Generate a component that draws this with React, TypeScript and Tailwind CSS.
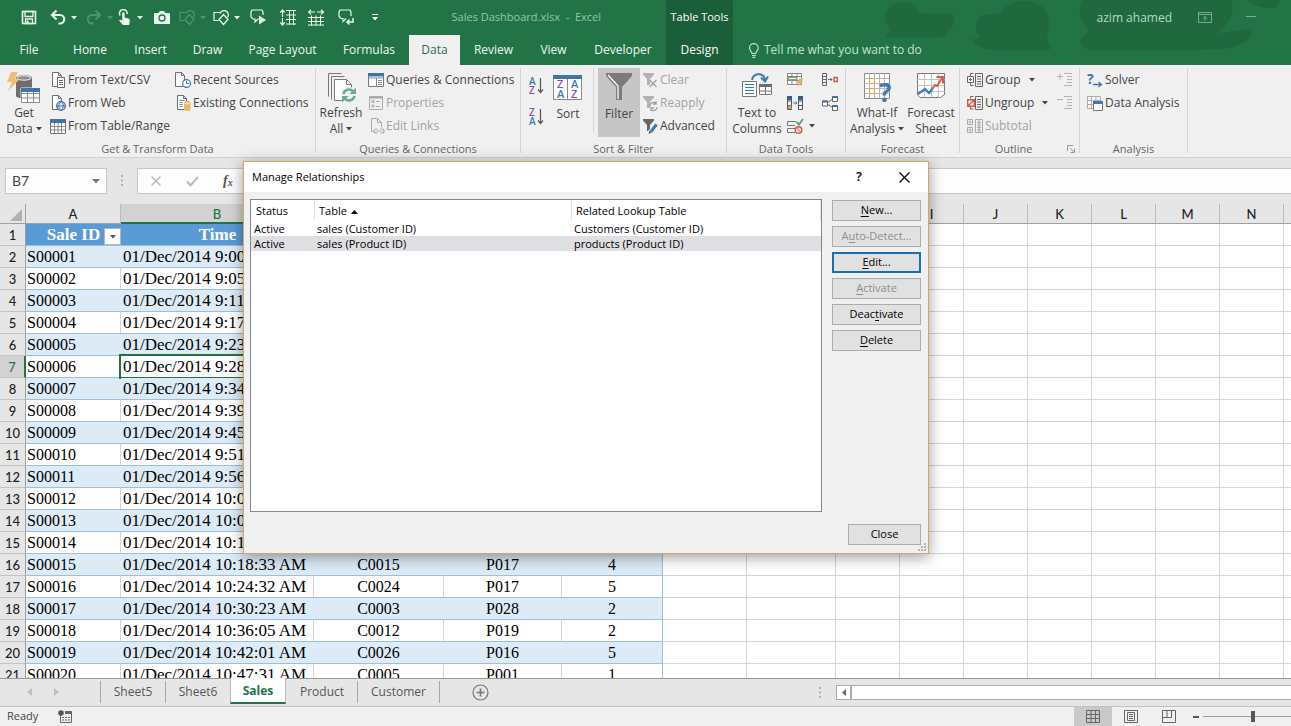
import { useState } from "react";
import type { ReactNode } from "react";

type Row = { id: string; time: string; customer?: string; product?: string; qty?: string };

const SALES: Row[] = [
  { id: "S00001", time: "01/Dec/2014 9:00" },
  { id: "S00002", time: "01/Dec/2014 9:05" },
  { id: "S00003", time: "01/Dec/2014 9:11" },
  { id: "S00004", time: "01/Dec/2014 9:17" },
  { id: "S00005", time: "01/Dec/2014 9:23" },
  { id: "S00006", time: "01/Dec/2014 9:28" },
  { id: "S00007", time: "01/Dec/2014 9:34" },
  { id: "S00008", time: "01/Dec/2014 9:39" },
  { id: "S00009", time: "01/Dec/2014 9:45" },
  { id: "S00010", time: "01/Dec/2014 9:51" },
  { id: "S00011", time: "01/Dec/2014 9:56" },
  { id: "S00012", time: "01/Dec/2014 10:01" },
  { id: "S00013", time: "01/Dec/2014 10:07" },
  { id: "S00014", time: "01/Dec/2014 10:12" },
  { id: "S00015", time: "01/Dec/2014 10:18:33 AM", customer: "C0015", product: "P017", qty: "4" },
  { id: "S00016", time: "01/Dec/2014 10:24:32 AM", customer: "C0024", product: "P017", qty: "5" },
  { id: "S00017", time: "01/Dec/2014 10:30:23 AM", customer: "C0003", product: "P028", qty: "2" },
  { id: "S00018", time: "01/Dec/2014 10:36:05 AM", customer: "C0012", product: "P019", qty: "2" },
  { id: "S00019", time: "01/Dec/2014 10:42:01 AM", customer: "C0026", product: "P016", qty: "5" },
  { id: "S00020", time: "01/Dec/2014 10:47:31 AM", customer: "C0005", product: "P001", qty: "1" },
];

const COLUMNS = [
  { name: "A", width: "w-[95px]" },
  { name: "B", width: "w-[193px]" },
  { name: "C", width: "w-[130px]" },
  { name: "D", width: "w-[118px]" },
  { name: "E", width: "w-[101px]" },
  { name: "F", width: "w-[84px]" },
  { name: "G", width: "w-[89px]" },
  { name: "H", width: "w-16" },
  { name: "I", width: "w-16" },
  { name: "J", width: "w-16" },
  { name: "K", width: "w-16" },
  { name: "L", width: "w-16" },
  { name: "M", width: "w-16" },
  { name: "N", width: "w-16" },
  { name: "", width: "w-16" },
];

const EMPTY_COLUMNS = COLUMNS.slice(5);

const TABS = [
  { label: "File", width: "w-[58px]" },
  { label: "Home", width: "w-16" },
  { label: "Insert", width: "w-[57px]" },
  { label: "Draw", width: "w-[57px]" },
  { label: "Page Layout", width: "w-[93px]" },
  { label: "Formulas", width: "w-20" },
  { label: "Data", width: "w-[51px]" },
  { label: "Review", width: "w-[67px]" },
  { label: "View", width: "w-[53px]" },
  { label: "Developer", width: "w-[86px]" },
];

const RELATIONSHIPS = [
  { status: "Active", table: "sales (Customer ID)", lookup: "Customers (Customer ID)" },
  { status: "Active", table: "sales (Product ID)", lookup: "products (Product ID)" },
];

export default function App() {
  const [dialogOpen, setDialogOpen] = useState(true);

  return (
    <div className="relative flex h-screen flex-col overflow-hidden bg-[#e6e6e6] font-['Open_Sans','Noto_Sans',sans-serif] text-xs text-[#444]">
      <TitleArea />
      <Ribbon />
      <FormulaBar />
      <Sheet />
      <SheetTabs />
      <StatusBar />
      {dialogOpen && <RelationshipsDialog onClose={() => setDialogOpen(false)} />}
    </div>
  );
}

/* ---------- title bar and ribbon tabs ---------- */

function TitleArea() {
  return (
    <header className="relative shrink-0 bg-[#227447] text-white">
      <svg className="absolute right-0 top-0" width="411" height="56" viewBox="0 0 411 56" fill="#20693f" aria-hidden>
        <path d="M6 38c1-5 4-6 4-9C3 20 4 10 12 5c9-5 19-4 25 3 3 5 6 5 12 5h22c5 2 4 14-1 16-4 3-2 5-6 7-12 3-40-1-58 2z" />
        <path d="M91 38c5 2 7 2 9-1-6-4-6-18 3-22 6-2 13 1 18-3C126 5 134 1 144 1c18 0 27 12 25 26-2 9-3 14 2 22-12 3-52 2-66 0-8-2-12-7-14-11z" />
        <path d="M202 0h150c2 12-1 20-8 27-5 5-7 6-2 6 13-1 24-6 30-3 2 6-6 13-18 17-16 5-118 4-140 4-6-1-12-3-14-8 0-6 6-8 9-13-9-8-12-20-7-30z" />
        <path d="M366 0h34l-4 8c-12 1-22-2-30-8z" />
      </svg>

      <div className="relative flex h-[35px] items-center">
        <div className="flex w-[666px] shrink-0 items-center pl-[21px]">
          <QatButton label="Save" width="w-[29px]">
            <path d="M1.500 2.500h13v12h-13z" fill="none" stroke="currentColor" strokeWidth="1.600" />
            <path d="M4 2.500h8v5H4zM4.500 10h7v4.500h-7z" fill="none" stroke="currentColor" strokeWidth="1.300" />
            <path d="M5.500 11.500h2v3h-2z" fill="currentColor" />
          </QatButton>
          <QatButton label="Undo" width="w-9" caret>
            <path d="M3 6h7a4 4 0 0 1 0 8.500H8.500" fill="none" stroke="currentColor" strokeWidth="2.200" />
            <path d="M6.500 1.500L2 6l4.500 4.500" fill="none" stroke="currentColor" strokeWidth="2.200" />
          </QatButton>
          <QatButton label="Redo" width="w-[30px]" caret dim>
            <path d="M13 6H6a4 4 0 0 0 0 8.500h1.500" fill="none" stroke="currentColor" strokeWidth="2" />
            <path d="M9.500 1.500L14 6l-4.500 4.500" fill="none" stroke="currentColor" strokeWidth="2" />
          </QatButton>
          <QatButton label="Touch mode" width="w-[38px]" caret>
            <path d="M4.200 6.500A3.800 3.800 0 1 1 11 5" fill="none" stroke="currentColor" strokeWidth="1.500" />
            <path d="M6.200 4.500a1.200 1.200 0 0 1 2.400 0V8.500l3.800 1c1.200.3 1.600 1 1.400 2.200L13.200 16H7L3 11.500c.5-1 1.500-1.200 3.200.2z" fill="currentColor" />
          </QatButton>
          <QatButton label="Camera" width="w-[25px]">
            <path d="M1 4h3.500L6 2h4l1.500 2H15c.6 0 1 .4 1 1v9c0 .6-.4 1-1 1H1c-.6 0-1-.4-1-1V5c0-.6.4-1 1-1z" fill="currentColor" />
            <circle cx="8" cy="9" r="3" fill="none" stroke="#227447" strokeWidth="1.300" />
          </QatButton>
          <QatButton label="Combine shapes" width="w-[34px]" caret dim>
            <ShapesGlyph />
          </QatButton>
          <QatButton label="Shapes" width="w-[37px]" caret>
            <ShapesGlyph />
          </QatButton>
          <QatButton label="Next comment" width="w-[30px]">
            <path d="M9 10H8l-3 3v-3H3L1 8V3l1-2h10l1 2v3" fill="none" stroke="currentColor" strokeWidth="1.200" />
            <path d="M9 6.500l7 4.500-7 4.500z" fill="currentColor" />
          </QatButton>
          <QatButton label="Row height" width="w-7">
            <path d="M6 1.500h10M6 6h10M6 10.500h10M6 15h10M9.500 1v15M13.500 1v15" stroke="currentColor" fill="none" />
            <path d="M2.500 1v15M.3 3.500L2.500 1l2.200 2.500M.3 13.500l2.200 2.500 2.200-2.500" stroke="currentColor" fill="none" strokeWidth="1.200" />
            <path d="M0 8h5v1H0z" fill="#227447" />
          </QatButton>
          <QatButton label="Column width" width="w-[30px]">
            <path d="M0 8.500h16M0 12.500h16M0 16h16M3.500 6.500v10M8 6.500v10M12.500 6.500v10" stroke="currentColor" fill="none" />
            <path d="M.5 3H7M3 .8L.5 3 3 5.200M9 3h6.500M13 .8L15.500 3 13 5.200" stroke="currentColor" fill="none" strokeWidth="1.200" />
          </QatButton>
          <QatButton label="Previous comment" width="w-[33px]">
            <path d="M8 9.500l-3 3v-3H3l-2-2V3l1-2h10l1 2v4" fill="none" stroke="currentColor" strokeWidth="1.200" />
            <path d="M15 9v4H9M11.500 10.500L9 13l2.500 2.500" fill="none" stroke="currentColor" strokeWidth="1.500" />
          </QatButton>
          <button type="button" aria-label="Customize toolbar">
            <svg width="8" height="8" viewBox="0 0 8 8" fill="currentColor" aria-hidden>
              <path d="M1 0h6v1H1zM1 3h6L4 6.500z" />
            </svg>
          </button>
          <div className="ml-auto whitespace-pre pr-[65px] text-[11px] text-[#92c7a8]">
            Sales Dashboard.xlsx{"  "}-{"  "}Excel
          </div>
        </div>
        <div className="flex h-full w-[67px] shrink-0 items-center justify-center whitespace-nowrap bg-[#1b5e3a] text-[11px]">
          Table Tools
        </div>
        <div className="ml-auto flex items-center text-[#b5d8c3]">
          <span>azim ahamed</span>
          <button type="button" aria-label="Ribbon display options" className="ml-[26px] opacity-60">
            <svg width="14" height="11" viewBox="0 0 14 11" fill="none" stroke="currentColor" aria-hidden>
              <path d="M.5.5h13v10H.5zM.5 2.500h13M7 9V4.500M5 6.500l2-2 2 2" />
            </svg>
          </button>
          <button type="button" aria-label="Minimize" className="ml-[34px] mr-[35px] opacity-60">
            <svg width="10" height="10" viewBox="0 0 10 10" stroke="currentColor" aria-hidden>
              <path d="M0 3.500h10" />
            </svg>
          </button>
        </div>
      </div>

      <nav className="relative flex h-[30px] items-stretch">
        {TABS.map((tab) => (
          <button
            key={tab.label}
            type="button"
            className={`${tab.width} shrink-0 whitespace-nowrap ${
              tab.label === "Data" ? "bg-[#f0f0f0] text-[#227447]" : "text-[#eef7f1]"
            }`}
          >
            {tab.label}
          </button>
        ))}
        <button type="button" className="w-[67px] shrink-0 bg-[#1b5e3a]">
          Design
        </button>
        <button type="button" className="ml-[15px] flex items-center gap-1 whitespace-nowrap text-[#c4e2d0]">
          <svg width="12" height="15" viewBox="0 0 12 15" fill="none" stroke="currentColor" strokeWidth="1.200" aria-hidden>
            <path d="M4 10.500C4 8.500 1.500 8 1.500 5a4.300 4.300 0 0 1 8.700 0c0 3-2.500 3.500-2.500 5.500zM4 12.500h3.800M4.500 14.300h2.800" />
          </svg>
          Tell me what you want to do
        </button>
      </nav>
    </header>
  );
}

function QatButton({
  label,
  width,
  caret,
  dim,
  children,
}: {
  label: string;
  width: string;
  caret?: boolean;
  dim?: boolean;
  children: ReactNode;
}) {
  return (
    <button
      type="button"
      aria-label={label}
      className={`${width} flex shrink-0 items-center gap-1 ${dim ? "text-[#4f9470]" : "text-[#eaf6ef]"}`}
    >
      <svg className="shrink-0" width="17" height="17" viewBox="0 0 17 17" aria-hidden>
        {children}
      </svg>
      {caret && <Caret />}
    </button>
  );
}

function ShapesGlyph() {
  return (
    <g fill="none" stroke="currentColor" strokeWidth="1.200">
      <path d="M5.500 11.500H1v-8h6" />
      <path d="M7 4.500a4.300 4.300 0 1 1 7.500 4" />
      <path d="M10.500 5.500L15 10.500l-4.500 5-4.500-5z" />
    </g>
  );
}

function Caret() {
  return (
    <svg className="shrink-0" width="6" height="4" viewBox="0 0 6 4" fill="currentColor" aria-hidden>
      <path d="M0 0h6L3 3.500z" />
    </svg>
  );
}

/* ---------- ribbon ---------- */

function Ribbon() {
  return (
    <section className="flex h-[93px] shrink-0 border-b border-[#d2d2d2] bg-[#f0f0f0]">
      <RibbonGroup label="Get & Transform Data" width="w-[316px]">
        <LargeButton lines={["Get", "Data"]} width="w-12" caret icon={<GetDataIcon />} />
        <div className="flex w-[125px] flex-col">
          <SmallButton label="From Text/CSV" icon={<TextFileIcon />} />
          <SmallButton label="From Web" icon={<WebFileIcon />} />
          <SmallButton label="From Table/Range" icon={<TableIcon />} />
        </div>
        <div className="flex flex-col">
          <SmallButton label="Recent Sources" icon={<RecentIcon />} />
          <SmallButton label="Existing Connections" icon={<ConnectionsIcon />} />
        </div>
      </RibbonGroup>

      <RibbonGroup label="Queries & Connections" width="w-[205px]">
        <LargeButton lines={["Refresh", "All"]} width="w-[50px]" caret icon={<RefreshIcon />} />
        <div className="flex flex-col">
          <SmallButton label="Queries & Connections" icon={<QueriesIcon />} />
          <SmallButton label="Properties" disabled icon={<PropertiesIcon />} />
          <SmallButton label="Edit Links" disabled icon={<LinksIcon />} />
        </div>
      </RibbonGroup>

      <RibbonGroup label="Sort & Filter" width="w-[206px]">
        <div className="flex w-[29px] flex-col items-start gap-3 pl-2 pt-2">
          <button type="button" aria-label="Sort A to Z">
            <SortOrderIcon top="A" bottom="Z" />
          </button>
          <button type="button" aria-label="Sort Z to A">
            <SortOrderIcon top="Z" bottom="A" />
          </button>
        </div>
        <LargeButton lines={["Sort"]} width="w-9" icon={<SortIcon />} />
        <div className="ml-[7px] mr-1 h-16 w-px bg-[#d5d5d5]" />
        <LargeButton lines={["Filter"]} width="w-[42px]" active icon={<FunnelIcon />} />
        <div className="flex flex-col">
          <SmallButton label="Clear" disabled icon={<SmallFunnel kind="clear" />} />
          <SmallButton label="Reapply" disabled icon={<SmallFunnel kind="reapply" />} />
          <SmallButton label="Advanced" icon={<SmallFunnel kind="advanced" />} />
        </div>
      </RibbonGroup>

      <RibbonGroup label="Data Tools" width="w-[119px]">
        <LargeButton lines={["Text to", "Columns"]} width="w-[60px]" icon={<TextToColumnsIcon />} />
        <div className="flex w-[35px] flex-col">
          <IconButton label="Flash Fill">
            <path d="M.5 1.500h14v11H.5zM.5 4.500h14M.5 8.500h14M5 1.500v11M10 1.500v11" stroke="#888" fill="#fff" />
            <path d="M1.500 5.500h8v2h-8z" fill="#fff" stroke="#7aa56b" />
            <path d="M12 6.500h4l-2 3h2L10.500 15l1.500-4h-2z" fill="#e8b35c" />
          </IconButton>
          <IconButton label="Remove Duplicates">
            <path d="M.5 1.500h4v13h-4zM.5 6h4M.5 10.500h4M11.500 1.500h4v13h-4zM11.500 6h4M11.500 10.500h4" stroke="#555" fill="none" />
            <path d="M0 1h5v4H0zM11 1h5v4h-5z" fill="#3d5f7f" />
            <path d="M1 10.500h3.500V14H1z" fill="#c9a25c" />
            <path d="M6 8h4M8.500 6.500L10 8 8.500 9.500" stroke="#3f74a8" fill="none" />
          </IconButton>
          <IconButton label="Data Validation" caret>
            <path d="M9 3.500H.5v4H8M8 10.500H.5v4H8" stroke="#777" fill="none" />
            <path d="M9.500 4l2.500 2.500L16 1" stroke="#52a083" strokeWidth="1.800" fill="none" />
            <circle cx="11.500" cy="12" r="3.300" stroke="#cf5a47" strokeWidth="1.400" fill="#f6d9d4" />
            <path d="M9.300 9.800l4.400 4.400" stroke="#cf5a47" />
          </IconButton>
        </div>
        <div className="flex flex-col">
          <IconButton label="Consolidate">
            <path d="M.5 1.500h4v12h-4zM.5 4.500h4M.5 7.500h4M.5 10.500h4" stroke="#666" fill="none" />
            <path d="M6 7.500h4M8.500 6L10 7.500 8.500 9" stroke="#3f74a8" fill="none" />
            <path d="M12 5.500h3.300v4H12z" stroke="#cf5a47" strokeWidth="1.400" fill="none" />
          </IconButton>
          <IconButton label="Relationships">
            <path d="M5 8l5-3.500M5 9l5 3" stroke="#666" fill="none" />
            <path d="M.5 6h5v5h-5zM10.500 1.500h5v5h-5zM10.500 10.500h5v5h-5z" stroke="#666" fill="#fff" />
            <path d="M.5 6.500h5M10.500 2h5M10.500 11h5" stroke="#3f74a8" strokeWidth="2" />
          </IconButton>
        </div>
      </RibbonGroup>

      <RibbonGroup label="Forecast" width="w-[114px]">
        <LargeButton lines={["What-If", "Analysis"]} width="w-[62px]" caret icon={<WhatIfIcon />} />
        <LargeButton lines={["Forecast", "Sheet"]} width="w-[46px]" icon={<ForecastIcon />} />
      </RibbonGroup>

      <RibbonGroup label="Outline" width="w-[120px]" launcher>
        <div className="flex w-[97px] flex-col pl-[5px]">
          <SmallButton label="Group" caret icon={<OutlineIcon kind="group" />} />
          <SmallButton label="Ungroup" caret icon={<OutlineIcon kind="ungroup" />} />
          <SmallButton label="Subtotal" disabled icon={<OutlineIcon kind="subtotal" />} />
        </div>
        <div className="flex flex-col">
          <IconButton label="Show Detail">
            <path d="M0 4.500h6M3 1.500v6M7 1.500h8M10 4.500h5M10 7.500h5M10 10.500h5M7 13.500h8" stroke="#b3b3b3" fill="none" />
          </IconButton>
          <IconButton label="Hide Detail">
            <path d="M0 4.500h6M7 1.500h8M10 4.500h5M10 7.500h5M10 10.500h5M7 13.500h8" stroke="#b3b3b3" fill="none" />
          </IconButton>
        </div>
      </RibbonGroup>

      <RibbonGroup label="Analysis" width="w-[108px]">
        <div className="flex flex-col pl-[5px]">
          <SmallButton label="Solver" icon={<SolverIcon />} />
          <SmallButton label="Data Analysis" icon={<DataAnalysisIcon />} />
        </div>
      </RibbonGroup>
    </section>
  );
}

function RibbonGroup({
  label,
  width,
  launcher,
  children,
}: {
  label: string;
  width: string;
  launcher?: boolean;
  children: ReactNode;
}) {
  return (
    <div className={`${width} flex shrink-0 pt-[3px]`}>
      <div className="flex min-w-0 flex-1 flex-col">
        <div className="flex h-[69px] shrink-0 items-start">{children}</div>
        <div className="mt-1 flex h-4 shrink-0 items-center whitespace-nowrap text-[11px] text-[#666]">
          <span className="flex-1 text-center">{label}</span>
          {launcher && (
            <button type="button" aria-label="Outline settings" className="w-3">
              <svg width="8" height="8" viewBox="0 0 8 8" fill="none" stroke="#999" aria-hidden>
                <path d="M.5 6V.5H6M3 3l4 4M7.500 3.500v4h-4" />
              </svg>
            </button>
          )}
        </div>
      </div>
      <div className="mb-1 w-px bg-[#d5d5d5]" />
    </div>
  );
}

function LargeButton({
  lines,
  width,
  icon,
  caret,
  active,
}: {
  lines: string[];
  width: string;
  icon: ReactNode;
  caret?: boolean;
  active?: boolean;
}) {
  return (
    <button
      type="button"
      className={`${width} flex h-[69px] shrink-0 flex-col items-center ${active ? "bg-[#c6c6c6]" : ""}`}
    >
      <span className="flex h-[38px] items-center">{icon}</span>
      {lines.map((line, i) => (
        <span key={line} className="flex h-4 items-center gap-[3px] whitespace-nowrap leading-4">
          {line}
          {caret && i === lines.length - 1 && <Caret />}
        </span>
      ))}
    </button>
  );
}

function SmallButton({
  label,
  icon,
  caret,
  disabled,
}: {
  label: string;
  icon: ReactNode;
  caret?: boolean;
  disabled?: boolean;
}) {
  return (
    <button
      type="button"
      disabled={disabled}
      className={`flex h-[23px] items-center gap-0.5 whitespace-nowrap pl-0.5 ${disabled ? "text-[#a3a3a3]" : ""}`}
    >
      {icon}
      {label}
      {caret && (
        <span className="pl-1.5">
          <Caret />
        </span>
      )}
    </button>
  );
}

function IconButton({ label, caret, children }: { label: string; caret?: boolean; children: ReactNode }) {
  return (
    <button type="button" aria-label={label} className="flex h-[23px] items-center gap-1.5">
      <Icon16>{children}</Icon16>
      {caret && <Caret />}
    </button>
  );
}

function Icon16({ children }: { children: ReactNode }) {
  return (
    <svg className="shrink-0 overflow-visible" width="16" height="16" viewBox="0 0 16 16" aria-hidden>
      {children}
    </svg>
  );
}

function GetDataIcon() {
  return (
    <svg width="34" height="34" viewBox="0 0 34 34" aria-hidden>
      <path d="M9 8c0-4 16-4 16 0v18c0 3-16 3-16 0z" fill="#6d6d6d" />
      <ellipse cx="17" cy="8" rx="7" ry="2.200" fill="#8c8c8c" stroke="#f0f0f0" />
      <path d="M4 2h7L8 9h5L1 21l4-9H0z" fill="#efbf78" />
      <path d="M14 18h19v15H14z" fill="#fff" stroke="#f0f0f0" />
      <path d="M14.500 18.500h18v14h-18zM14.500 23.500h18M14.500 28h18M20.500 21v11M26.500 21v11" fill="none" stroke="#8a8a8a" />
      <path d="M14 18h19v4H14z" fill="#3f74a8" />
    </svg>
  );
}

function FileShape({ color = "#6d6d6d" }: { color?: string }) {
  return (
    <>
      <path d="M2.500.5h6l3 3v11h-9z" fill="#fff" stroke={color} />
      <path d="M8.500.5v3h3" fill="none" stroke={color} />
    </>
  );
}

function TextFileIcon() {
  return (
    <Icon16>
      <FileShape />
      <path d="M7.500 5.500h7v10h-7z" fill="#fff" stroke="#6d6d6d" />
      <path d="M9 8.500h4M9 10.500h4M9 12.500h4" stroke="#6d6d6d" />
    </Icon16>
  );
}

function WebFileIcon() {
  return (
    <Icon16>
      <FileShape />
      <circle cx="11" cy="11" r="4.300" fill="#e3eef7" stroke="#3f74a8" strokeWidth="1.300" />
      <path d="M6.500 11h9M11 6.500c-3 3-3 6 0 9M11 6.500c3 3 3 6 0 9" fill="none" stroke="#3f74a8" />
    </Icon16>
  );
}

function TableIcon() {
  return (
    <Icon16>
      <path d="M.5 1.500h15v14H.5z" fill="#fff" stroke="#777" />
      <path d="M.5 8.500h15M.5 12h15M4.500 5v10M8 5v10M11.500 5v10" stroke="#8a8a8a" />
      <path d="M0 1h16v4H0z" fill="#3f74a8" />
    </Icon16>
  );
}

function RecentIcon() {
  return (
    <Icon16>
      <path d="M.5.5h6l3 3v11h-9z" fill="#fff" stroke="#6d6d6d" />
      <path d="M6.500.5v3h3" fill="none" stroke="#6d6d6d" />
      <circle cx="11.500" cy="11.500" r="3.900" fill="#fff" stroke="#3f74a8" strokeWidth="1.200" />
      <path d="M11.500 9v2.500H14" fill="none" stroke="#3f74a8" />
    </Icon16>
  );
}

function ConnectionsIcon() {
  return (
    <Icon16>
      <FileShape />
      <path d="M4.500 5.500h5M4.500 7.500h3M4.500 9.500h3M4.500 11.500h3" stroke="#888" />
      <path d="M9 7.500c0-2 6.500-2 6.500 0v7c0 2-6.500 2-6.500 0z" fill="#e9b968" />
      <path d="M9.500 8c1 1 4.500 1 5.500 0" stroke="#fff" fill="none" />
    </Icon16>
  );
}

function RefreshIcon() {
  return (
    <svg width="32" height="32" viewBox="0 0 32 32" aria-hidden>
      <path d="M3.500 25.500v-23h13M6.500 28.500v-23h13" fill="none" stroke="#777" />
      <path d="M9.500 8.500h12l5 5v16h-17z" fill="#fff" stroke="#777" />
      <path d="M21.500 8.500v5h5" fill="none" stroke="#777" />
      <circle cx="24" cy="24" r="8" fill="#f0f0f0" />
      <path d="M18.500 23a5.500 5.500 0 0 1 10-2M29.500 25a5.500 5.500 0 0 1-10 2" fill="none" stroke="#6aab8e" strokeWidth="2.500" />
      <path d="M31 16.500v6.500h-6.500zM17 31.500V25h6.500z" fill="#6aab8e" />
    </svg>
  );
}

function QueriesIcon() {
  return (
    <Icon16>
      <path d="M.5 1.500h15v13H.5z" fill="#fff" stroke="#777" />
      <path d="M0 1h16v3.500H0z" fill="#3f74a8" />
      <path d="M.5 6h15M8.500 6v8.500M10 8.500h4M10 10.500h4M10 12.500h4" stroke="#888" />
    </Icon16>
  );
}

function PropertiesIcon() {
  return (
    <Icon16>
      <path d="M1.500 1.500h13v13h-13z" fill="none" stroke="#aaa" />
      <path d="M1.500 2.500h13" stroke="#aaa" strokeWidth="2" />
      <path d="M4 5.500h2v2H4zM4 10h2v2H4zM8 6.500h4M8 11.500h4" fill="none" stroke="#aaa" />
    </Icon16>
  );
}

function LinksIcon() {
  return (
    <Icon16>
      <path d="M3.500 13.500V.5h6l4 4v5M9.500.5v4h4M3.500 13.500h2" fill="none" stroke="#aaa" />
      <path d="M9.500 11H8a2 2 0 0 0 0 4h1.500M12.500 11H14a2 2 0 0 1 0 4h-1.500M8.500 13h5" fill="none" stroke="#aaa" strokeWidth="1.200" />
    </Icon16>
  );
}

function LetterMark({ x, y, size, children }: { x: number; y: number; size: number; children: string }) {
  return (
    <text x={x} y={y} fontSize={size} fontWeight="600" fill={children === "A" ? "#3d7ab8" : "#8a4f9e"}>
      {children}
    </text>
  );
}

function SortOrderIcon({ top, bottom }: { top: string; bottom: string }) {
  return (
    <svg className="overflow-visible" width="15" height="19" viewBox="0 0 15 19" aria-hidden>
      <LetterMark x={0} y={9} size={10}>{top}</LetterMark>
      <LetterMark x={0} y={18} size={10}>{bottom}</LetterMark>
      <path d="M11.500 2v14M9 13.500l2.500 3 2.500-3" fill="none" stroke="#555" strokeWidth="1.200" />
    </svg>
  );
}

function SortIcon() {
  return (
    <svg className="overflow-visible" width="30" height="27" viewBox="0 0 30 27" aria-hidden>
      <path d="M.5 1.500h28v24H.5zM14.500 4v22" fill="#fff" stroke="#888" />
      <path d="M0 1h29v4H0z" fill="#3f74a8" />
      <LetterMark x={4} y={14} size={11}>Z</LetterMark>
      <LetterMark x={4} y={24} size={11}>A</LetterMark>
      <LetterMark x={18} y={14} size={11}>A</LetterMark>
      <LetterMark x={18} y={24} size={11}>Z</LetterMark>
    </svg>
  );
}

function FunnelIcon() {
  return (
    <svg width="28" height="30" viewBox="0 0 28 30" aria-hidden>
      <path d="M1 1h26v3L17 15v13h-6V15L1 4z" fill="#7b7b7b" />
      <path d="M3 3l10 11v13" fill="none" stroke="#fff" strokeWidth="1.300" />
    </svg>
  );
}

function SmallFunnel({ kind }: { kind: "clear" | "reapply" | "advanced" }) {
  return (
    <Icon16>
      <path d="M1 1h11v1.500L8 7v6H5V7L1 2.500z" fill={kind === "advanced" ? "#666" : "#b5b0b5"} />
      {kind === "clear" && <path d="M7.500 8l7 7M14.500 8l-7 7" stroke="#a0a0a0" strokeWidth="1.300" />}
      {kind === "reapply" && (
        <path d="M8 11a3.500 3.500 0 0 1 6-2.500M14 6v3h-3M15 12a3.500 3.500 0 0 1-6 2.500M9 16v-3h3" fill="none" stroke="#a0a0a0" strokeWidth="1.300" />
      )}
      {kind === "advanced" && (
        <>
          <path d="M8 14.500L14.500 7" stroke="#f0f0f0" strokeWidth="5" />
          <path d="M9 13.500l5.500-7" stroke="#3f7ab0" strokeWidth="3" />
          <path d="M6.500 16l1-3.500 2.300 1.900z" fill="#555" />
        </>
      )}
    </Icon16>
  );
}

function TextToColumnsIcon() {
  return (
    <svg width="32" height="32" viewBox="0 0 32 32" aria-hidden>
      <path d="M1.500 10.500h14v15h-14z" fill="#fff" stroke="#777" />
      <path d="M4 13.500h9M4 16.500h9M4 19.500h9M4 22.500h9" stroke="#3f74a8" />
      <path d="M18.500 13.500h12v10h-12zM18.500 20h12M24.500 15v8" fill="#fff" stroke="#777" />
      <path d="M18 13h13v3H18z" fill="#6d6d6d" />
      <path d="M11 9c1-7 11-8 13-1v2" fill="none" stroke="#3f7ab0" strokeWidth="2" />
      <path d="M20 6.500l4 4 3-5" fill="none" stroke="#3f7ab0" strokeWidth="2" />
    </svg>
  );
}

function WhatIfIcon() {
  return (
    <svg className="overflow-visible" width="30" height="32" viewBox="0 0 30 32" aria-hidden>
      <path d="M2.500 2.500h25v25h-25z" fill="#fff" stroke="#888" />
      <path d="M2.500 7.500h25M2.500 12.500h25M2.500 17.500h25M2.500 22.500h25M7.500 2.500v25M12.500 2.500v25M17.500 2.500v25M22.500 2.500v25" stroke="#b5b5b5" />
      <path d="M7.500 7.500h5v5h-5zM7.500 17.500h5v5h-5z" fill="#fff" stroke="#e0a050" />
      <text x="17" y="31" fontSize="26" fontWeight="700" fill="#3f7ab0">?</text>
    </svg>
  );
}

function ForecastIcon() {
  return (
    <svg width="32" height="32" viewBox="0 0 32 32" aria-hidden>
      <path d="M2.500 2.500h27v21l-4 3H5l-2.500-3z" fill="#fff" stroke="#777" />
      <path d="M2.500 8.500h27M2.500 14.500h27M2.500 20.500h27M9.500 2.500v24M16.500 2.500v24M23.500 2.500v24" stroke="#c2c2c2" />
      <path d="M3 23l7-5 4 4 4-5" fill="none" stroke="#3f7ab0" strokeWidth="2.200" />
      <path d="M17 18l3-4 2 1 5-8M21.500 6H28v6.500" fill="none" stroke="#cf5f48" strokeWidth="2" />
    </svg>
  );
}

function OutlineIcon({ kind }: { kind: "group" | "ungroup" | "subtotal" }) {
  const line = kind === "subtotal" ? "#aaa" : "#666";
  return (
    <Icon16>
      <path d="M8.500 1.500h7v13h-7z" fill="none" stroke={line} />
      <path d="M10 4.500h4M10 7h4M10 9.500h4M10 12h4" stroke={line} />
      {kind === "group" && <path d="M6.500 1.500h-3v3M.5 4.500h6v6h-6zM2 7.500h3M3.500 6v3M3.500 10.500v3h3" fill="none" stroke={line} />}
      {kind === "ungroup" && (
        <>
          <path d="M6.500 1.500h-3v2M3.500 12v2h3" fill="none" stroke={line} />
          <path d="M.7 4.700h6.600v6.600H.7zM1 11l6-6" fill="none" stroke="#cf5a47" strokeWidth="1.400" />
        </>
      )}
      {kind === "subtotal" && (
        <path d="M.5 1.500h5v5h-5zM.5 9.500h5v5h-5zM3 2.500v3M1.500 4h3M3 10.500v3M1.500 12h3M12 1.500v13" fill="none" stroke={line} />
      )}
    </Icon16>
  );
}

function SolverIcon() {
  return (
    <Icon16>
      <text x="0" y="12" fontSize="14" fontWeight="700" fill="#3f74a8">?</text>
      <path d="M6 12.500h8M11.500 10l3 2.500-3 2.500" fill="none" stroke="#3f74a8" strokeWidth="1.300" />
    </Icon16>
  );
}

function DataAnalysisIcon() {
  return (
    <Icon16>
      <path d="M.5 1.500h13v12H.5zM.5 5.500h13M.5 9.500h13M4.500 1.500v12M9 1.500v12" fill="#fff" stroke="#aaa" />
      <path d="M6.500 6.500h9v9h-9z" fill="#fff" stroke="#777" />
      <path d="M6 6h10v3H6z" fill="#3f7ab0" />
    </Icon16>
  );
}

/* ---------- formula bar and grid ---------- */

function FormulaBar() {
  return (
    <section className="flex shrink-0 items-center pb-2.5 pl-[5px] pt-2.5">
      <div className="flex h-[26px] w-[102px] shrink-0 items-center border border-[#c6c6c6] bg-[#fdfdfd] px-1.5">
        <input
          aria-label="Name box"
          defaultValue="B7"
          className="w-full min-w-0 bg-transparent font-['Lato',sans-serif] text-sm outline-none"
        />
        <svg className="shrink-0" width="8" height="5" viewBox="0 0 8 5" fill="#777" aria-hidden>
          <path d="M0 0h8L4 4.500z" />
        </svg>
      </div>
      <Dots className="ml-[13px]" />
      <div className="ml-[13px] flex h-[26px] min-w-0 flex-1 items-center border-y border-l border-[#c6c6c6] bg-[#fdfdfd] pl-3">
        <svg width="84" height="16" viewBox="0 0 84 16" fill="none" aria-hidden>
          <path d="M1.500 3.500l9 9M10.500 3.500l-9 9" stroke="#bbb" strokeWidth="1.500" />
          <path d="M37 8.500l3.500 4L48 4" stroke="#bbb" strokeWidth="2" />
          <text x="73" y="12" fontSize="14" fontStyle="italic" fontWeight="600" fill="#555" fontFamily="Liberation Serif">
            f
            <tspan fontSize="10" dy="1">x</tspan>
          </text>
        </svg>
        <input aria-label="Formula" className="min-w-0 flex-1 bg-transparent px-3 outline-none" />
      </div>
    </section>
  );
}

function Dots({ className }: { className: string }) {
  return (
    <svg className={`${className} shrink-0`} width="4" height="12" viewBox="0 0 4 12" fill="#b0b0b0" aria-hidden>
      <path d="M1 0h2v2H1zM1 4.500h2v2H1zM1 9h2v2H1z" />
    </svg>
  );
}

function Sheet() {
  return (
    <main className="min-h-0 flex-1 overflow-hidden bg-white">
      <table className="w-[1348px] table-fixed border-separate border-spacing-0">
        <colgroup>
          <col className="w-[26px]" />
          {COLUMNS.map((col, i) => (
            <col key={i} className={col.width} />
          ))}
        </colgroup>
        <thead className="font-['Lato',sans-serif] text-[13px]">
          <tr className="h-5">
            <th className="border-b border-r border-[#9f9f9f] bg-[#e6e6e6] p-0">
              <svg className="ml-2.5 mt-0.5" width="12" height="12" viewBox="0 0 12 12" fill="#b1b1b1" aria-hidden>
                <path d="M12 0v12H0z" />
              </svg>
            </th>
            {COLUMNS.map((col, i) => (
              <th
                key={i}
                scope="col"
                className={`border-r border-r-[#bcbcbc] p-0 pt-0.5 font-medium leading-none ${
                  col.name === "B"
                    ? "border-b-2 border-b-[#227447] bg-[#d2d2d2] text-[#227447]"
                    : "border-b border-b-[#9f9f9f] bg-[#e6e6e6] text-[#222]"
                }`}
              >
                {col.name}
              </th>
            ))}
          </tr>
        </thead>
        <tbody className="font-['Liberation_Serif',serif] text-base text-black">
          <tr className="h-[22px] bg-[#5b9bd5] text-[17px] font-bold text-white">
            <RowNumber n={1} />
            <HeaderCell label="Sale ID" />
            <HeaderCell label="Time" />
            <HeaderCell />
            <HeaderCell />
            <HeaderCell />
            <EmptyCells />
          </tr>
          {SALES.map((row, i) => {
            const banded = i % 2 === 0;
            const cell = `border-b border-r border-b-[#9bbfdf] p-0 leading-5 ${
              banded ? "border-r-[#ddebf7] bg-[#ddebf7]" : "border-r-[#d4d4d4] bg-white"
            }`;
            return (
              <tr key={row.id} className="h-[22px]">
                <RowNumber n={i + 2} />
                <td className={cell}>
                  <div className="pl-px">{row.id}</div>
                </td>
                <td className={`${cell} relative`}>
                  <div className="whitespace-nowrap pl-0.5 text-[17px] leading-5">{row.time}</div>
                  {row.id === "S00006" && (
                    <div className="absolute -bottom-0.5 -left-0.5 -right-0.5 -top-0.5 border-2 border-[#227447]" />
                  )}
                </td>
                <td className={`${cell} text-center`}>{row.customer}</td>
                <td className={`${cell} text-center`}>{row.product}</td>
                <td
                  className={`border-b border-r border-[#9bbfdf] p-0 text-center leading-5 ${
                    banded ? "bg-[#ddebf7]" : "bg-white"
                  }`}
                >
                  {row.qty}
                </td>
                <EmptyCells />
              </tr>
            );
          })}
        </tbody>
      </table>
    </main>
  );
}

function RowNumber({ n }: { n: number }) {
  const selected = n === 7;
  return (
    <th
      scope="row"
      className={`border-b border-b-[#c4c4c4] p-0 text-center font-['Lato',sans-serif] text-[13px] font-medium leading-5 ${
        selected
          ? "border-r-2 border-r-[#227447] bg-[#d2d2d2] text-[#227447]"
          : "border-r border-r-[#9f9f9f] bg-[#e6e6e6] text-[#222]"
      }`}
    >
      {n}
    </th>
  );
}

function HeaderCell({ label }: { label?: string }) {
  return (
    <td className="relative border-b border-[#9bbfdf] p-0 text-center leading-5">
      {label}
      <button
        type="button"
        aria-label="Filter column"
        className="absolute right-0 top-1 flex size-[17px] items-center justify-center border border-[#b5b5b5] bg-white text-[#555]"
      >
        <Caret />
      </button>
    </td>
  );
}

function EmptyCells() {
  return (
    <>
      {EMPTY_COLUMNS.map((_, i) => (
        <td key={i} className="border-b border-r border-[#d4d4d4] bg-white p-0" />
      ))}
    </>
  );
}

/* ---------- sheet tabs and status bar ---------- */

function SheetTabs() {
  return (
    <nav className="flex h-7 shrink-0 items-start border-t border-[#999] bg-[#e6e6e6] text-[#555]">
      <div className="flex h-[25px] w-[100px] shrink-0 items-center gap-[22px] pl-[27px]">
        <button type="button" aria-label="Previous sheet">
          <svg width="5" height="8" viewBox="0 0 5 8" fill="#c0c0c0" aria-hidden>
            <path d="M5 0v8L0 4z" />
          </svg>
        </button>
        <button type="button" aria-label="Next sheet">
          <svg width="5" height="8" viewBox="0 0 5 8" fill="#c0c0c0" aria-hidden>
            <path d="M0 0v8l5-4z" />
          </svg>
        </button>
      </div>
      <SheetTab label="Sheet5" width="w-[65px]" divider />
      <SheetTab label="Sheet6" width="w-[65px]" divider />
      <button
        type="button"
        className="-mt-px h-[26px] w-14 shrink-0 border-x border-b-2 border-x-[#bbb] border-b-[#227447] bg-white pt-0.5 font-bold text-[#227447]"
      >
        Sales
      </button>
      <SheetTab label="Product" width="w-[71px]" />
      <SheetTab label="Customer" width="w-[82px]" divider />
      <div className="mt-0.5 h-[22px] w-px bg-[#a5a5a5]" />
      <button type="button" aria-label="New sheet" className="ml-8 flex h-[26px] items-center">
        <svg width="17" height="17" viewBox="0 0 17 17" fill="none" stroke="#777" aria-hidden>
          <circle cx="8.500" cy="8.500" r="7.500" strokeWidth="1.200" />
          <path d="M8.500 4.500v8M4.500 8.500h8" strokeWidth="1.700" />
        </svg>
      </button>
      <div className="ml-auto flex h-[27px] w-[473px] items-center">
        <Dots className="" />
        <div className="ml-3.5 flex h-[15px] flex-1 border-y border-l border-[#ababab] bg-white">
          <button type="button" aria-label="Scroll left" className="flex w-[15px] items-center justify-center border-r-2 border-[#ababab]">
            <svg width="4" height="7" viewBox="0 0 4 7" fill="#666" aria-hidden>
              <path d="M4 0v7L0 3.500z" />
            </svg>
          </button>
        </div>
      </div>
    </nav>
  );
}

function SheetTab({ label, width, divider }: { label: string; width: string; divider?: boolean }) {
  return (
    <button type="button" className={`${width} flex h-[26px] shrink-0 items-center`}>
      <span className={`h-[22px] w-px ${divider ? "bg-[#a5a5a5]" : ""}`} />
      <span className="flex-1 text-center">{label}</span>
    </button>
  );
}

function StatusBar() {
  return (
    <footer className="flex h-5 shrink-0 items-center border-t border-[#c2c2c2] bg-[#f0f0f0] pl-[7px] text-[11px]">
      <span>Ready</span>
      <button type="button" aria-label="Record macro" className="ml-5">
        <svg width="14" height="13" viewBox="0 0 14 13" aria-hidden>
          <path d="M2.500 4v8.500h11v-11H7" fill="none" stroke="#666" />
          <path d="M7 1h6.500v3H7z" fill="#666" />
          <circle cx="3" cy="3" r="2.800" fill="#555" />
          <path d="M4 7.500h2M7 7.500h2M10 7.500h2M4 10h2M7 10h2M10 10h2" stroke="#666" />
        </svg>
      </button>
      <div className="ml-auto flex h-full w-[217px] items-center">
        <ViewButton label="Normal" active>
          <path d="M.5.5h13v12H.5zM.5 4.500h13M.5 8.500h13M5 .5v12M9.500.5v12" />
        </ViewButton>
        <ViewButton label="Page Layout">
          <path d="M.5.5h13v12H.5zM3.500 2.500h7v8h-7zM5 4.500h4M5 6.500h4M5 8.500h4" />
        </ViewButton>
        <ViewButton label="Page Break Preview">
          <path d="M.5.5h13v12H.5zM5 .5v7M9.500.5v7M.5 7.500h9" />
        </ViewButton>
        <button type="button" aria-label="Zoom out" className="ml-[5px] h-0.5 w-1.5 bg-[#555]" />
        <input
          type="range"
          aria-label="Zoom"
          min={0}
          max={100}
          defaultValue={57}
          className="ml-1 h-3 min-w-0 flex-1 appearance-none bg-transparent [&::-webkit-slider-runnable-track]:h-px [&::-webkit-slider-runnable-track]:bg-[#9c9c9c] [&::-webkit-slider-thumb]:-mt-[5px] [&::-webkit-slider-thumb]:h-[11px] [&::-webkit-slider-thumb]:w-1 [&::-webkit-slider-thumb]:appearance-none [&::-webkit-slider-thumb]:bg-[#555]"
        />
      </div>
    </footer>
  );
}

function ViewButton({ label, active, children }: { label: string; active?: boolean; children: ReactNode }) {
  return (
    <button
      type="button"
      aria-label={label}
      className={`flex h-full w-[38px] shrink-0 items-center justify-center ${active ? "bg-[#c9c9c9]" : ""}`}
    >
      <svg width="14" height="13" viewBox="0 0 14 13" fill="none" stroke="#666" aria-hidden>
        {children}
      </svg>
    </button>
  );
}

/* ---------- manage relationships ---------- */

function RelationshipsDialog({ onClose }: { onClose: () => void }) {
  const [selected, setSelected] = useState(1);

  return (
    <div
      role="dialog"
      aria-labelledby="dialog-title"
      className="absolute left-[243px] top-[161px] w-[686px] border border-[#cda868] bg-[#f0f0f0] text-[11px] text-black shadow-[0_3px_14px_rgba(0,0,0,0.4)]"
    >
      <div className="flex h-[30px] items-center bg-white pl-2 pr-[18px]">
        <h2 id="dialog-title">Manage Relationships</h2>
        <button type="button" aria-label="Help" className="ml-auto w-3 text-[13px] font-semibold">
          ?
        </button>
        <button type="button" aria-label="Close dialog" className="ml-[34px]" onClick={onClose}>
          <svg width="11" height="11" viewBox="0 0 11 11" fill="none" stroke="#000" strokeWidth="1.200" aria-hidden>
            <path d="M.5.5l10 10M10.500.5l-10 10" />
          </svg>
        </button>
      </div>

      <div className="flex gap-2.5 pl-1.5 pr-[7px] pt-[7px]">
        <div className="h-[313px] flex-1 border border-[#828790] bg-white">
          <table className="w-full table-fixed border-separate border-spacing-0 text-left">
            <colgroup>
              <col className="w-16" />
              <col className="w-[257px]" />
              <col />
            </colgroup>
            <thead>
              <tr className="h-[21px]">
                <th className="border-r border-[#e2e2e2] pb-0 pl-[5px] pt-0.5 font-normal">Status</th>
                <th className="border-r border-[#e2e2e2] pb-0 pl-1 pt-0.5 font-normal">
                  <span className="flex items-center gap-1">
                    Table
                    <svg width="7" height="4" viewBox="0 0 7 4" aria-hidden>
                      <path d="M3.500 0L7 4H0z" />
                    </svg>
                  </span>
                </th>
                <th className="border-r border-[#e2e2e2] pb-0 pl-1 pt-0.5 font-normal">Related Lookup Table</th>
              </tr>
            </thead>
            <tbody>
              {RELATIONSHIPS.map((rel, i) => (
                <tr
                  key={rel.table}
                  onClick={() => setSelected(i)}
                  className={`h-[15px] leading-[15px] ${selected === i ? "bg-[#dedee3]" : ""}`}
                >
                  <td className="py-0 pl-[3px]">{rel.status}</td>
                  <td className="py-0 pl-0.5">{rel.table}</td>
                  <td className="py-0 pl-0.5">{rel.lookup}</td>
                </tr>
              ))}
            </tbody>
          </table>
        </div>
        <div className="flex w-[89px] flex-col gap-[5px] pt-px">
          <DialogButton before="" hot="N" after="ew..." />
          <DialogButton before="A" hot="u" after="to-Detect..." disabled />
          <DialogButton before="" hot="E" after="dit..." focused />
          <DialogButton before="" hot="A" after="ctivate" disabled />
          <DialogButton before="Deac" hot="t" after="ivate" />
          <DialogButton before="" hot="D" after="elete" />
        </div>
      </div>

      <div className="flex h-[41px] justify-end pr-[7px] pt-3">
        <button type="button" onClick={onClose} className="h-[21px] w-[73px] border border-[#adadad] bg-[#e1e1e1]">
          Close
        </button>
      </div>
      <svg className="absolute bottom-px right-px" width="10" height="10" viewBox="0 0 10 10" fill="#b5b5b5" aria-hidden>
        <path d="M7 1h2v2H7zM4 4h2v2H4zM7 4h2v2H7zM1 7h2v2H1zM4 7h2v2H4zM7 7h2v2H7z" />
      </svg>
    </div>
  );
}

function DialogButton({
  before,
  hot,
  after,
  disabled,
  focused,
}: {
  before: string;
  hot: string;
  after: string;
  disabled?: boolean;
  focused?: boolean;
}) {
  return (
    <button
      type="button"
      disabled={disabled}
      className={`flex h-[21px] items-center justify-center bg-[#e1e1e1] ${
        focused ? "border-2 border-[#1a6fb0]" : "border border-[#adadad]"
      } ${disabled ? "text-[#8d8d8d]" : ""}`}
    >
      <span>
        {before}
        <u className="underline-offset-2">{hot}</u>
        {after}
      </span>
    </button>
  );
}
